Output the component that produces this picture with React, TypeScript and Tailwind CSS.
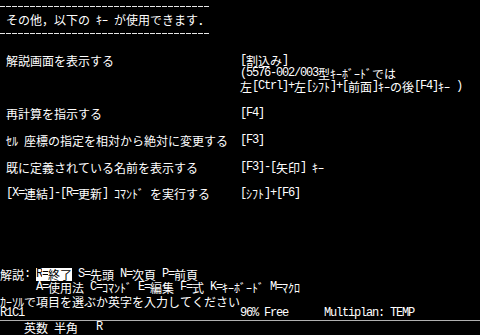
import type { ReactNode } from 'react';

type Seg = { t: string; inv?: boolean };

// 80 x 25 text screen, 6px per half-width cell
const ROWS: Seg[][] = [
    [],
    [{ t: ' その他，以下の ｷｰ が使用できます．' }],
    [],
    [],
    [{ t: ' 解説画面を表示する                     [割込み]' }],
    [{ t: '                                        (5576-002/003型ｷｰﾎﾞｰﾄﾞでは' }],
    [{ t: '                                        左[Ctrl]+左[ｼﾌﾄ]+[前面]ｷｰの後[F4]ｷｰ )' }],
    [],
    [{ t: ' 再計算を指示する                       [F4]' }],
    [],
    [{ t: ' ｾﾙ 座標の指定を相対から絶対に変更する  [F3]' }],
    [],
    [{ t: ' 既に定義されている名前を表示する       [F3]-[矢印] ｷｰ' }],
    [],
    [{ t: ' [X=連結]-[R=更新] ｺﾏﾝﾄﾞ を実行する     [ｼﾌﾄ]+[F6]' }],
    [],
    [],
    [],
    [],
    [],
    [{ t: '解説: ' }, { t: 'R=終了', inv: true }, { t: ' S=先頭 N=次頁 P=前頁' }],
    [{ t: '      A=使用法 C=ｺﾏﾝﾄﾞ E=編集 F=式 K=ｷｰﾎﾞｰﾄﾞ M=ﾏｸﾛ' }],
    [{ t: 'ｶｰｿﾙで項目を選ぶか英字を入力してください' }],
    [{ t: 'R1C1                                    96% Free      Multiplan: TEMP' }],
    [{ t: '    英数 半角   R' }],
];

function isHalf(ch: string): boolean {
    const c = ch.charCodeAt(0);
    return c < 0x7f || (c >= 0xff61 && c <= 0xff9f);
}

function isAscii(ch: string): boolean {
    return ch.charCodeAt(0) < 0x7f;
}

function Cells({ t, inv }: Seg) {
    return (
        <>
            {Array.from(t).map((ch, i) => (
                <span
                    key={i}
                    className={`inline-flex justify-center overflow-visible h-full items-center ${isHalf(ch) ? 'w-[6px]' : 'w-[12px]'} ${isAscii(ch)
                        ? "font-['Liberation_Mono',monospace] text-[12px] tracking-[-1.2px]"
                        : "font-['Noto_Sans_CJK_JP',sans-serif] text-[12px]"
                    } ${inv ? 'bg-white text-black' : ''}`}
                >
                    {ch === ' ' ? '\u00a0' : ch}
                </span>
            ))}
        </>
    );
}

function DashLine() {
    return (
        <div className="h-[13.4px] flex items-center">
            <div className="w-[210px] h-px bg-[repeating-linear-gradient(90deg,#e8e8e8_0_5px,transparent_5px_6px)]" />
        </div>
    );
}

export default function App() {
    const lines: ReactNode[] = ROWS.map((segs, r) => {
        if (r === 0 || r === 2) return <DashLine key={r} />;
        return (
            <div
                key={r}
                className={`flex h-[13.4px] leading-[13.4px] whitespace-pre ${r === 23 ? 'border-b border-[#b0b0b0]' : ''}`}
            >
                {segs.map((s, i) => (
                    <Cells key={i} t={s.t} inv={s.inv} />
                ))}
            </div>
        );
    });

    return (
        <div className="w-[480px] h-[335px] bg-black text-white overflow-hidden">
            {lines}
        </div>
    );
}
